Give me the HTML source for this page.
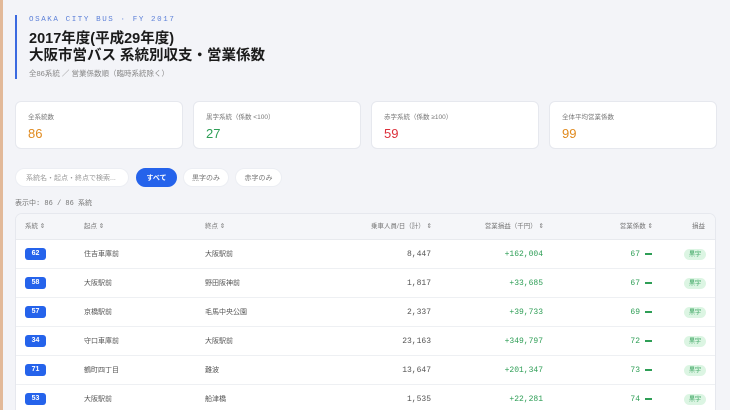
<!DOCTYPE html>
<html><head><meta charset="utf-8"><style>
*{box-sizing:border-box;margin:0;padding:0}
html,body{width:730px;height:410px;overflow:hidden}
body{background:#f3f4f8;font-family:"Liberation Sans","Noto Sans CJK JP",sans-serif;color:#222;position:relative}
.edge{position:absolute;left:0;top:0;width:3px;height:410px;background:#e2b999}
.hdr{position:absolute;left:15px;top:15px;height:64px;border-left:2px solid #3b6ae0;padding-left:12px}
.eyebrow{font-family:"Liberation Mono",monospace;font-size:7.5px;letter-spacing:1.6px;color:#5b7fd8;margin-top:1px}
.title{font-size:14.5px;font-weight:bold;line-height:17px;margin-top:7px;color:#1a1a1a}
.sub{font-size:7.5px;color:#888;margin-top:3px}
.card{position:absolute;top:101px;width:168px;height:48px;background:#fff;border:1px solid #e6e8ee;border-radius:6px;padding:9px 12px}
.card .l{font-size:6.5px;color:#777}
.card .v{font-size:13px;margin-top:5px}
.pill{position:absolute;top:168px;height:19px;border-radius:10px;background:#fff;font-size:7px;color:#777;line-height:19px;text-align:center;border:1px solid #eceef3}
.cnt{position:absolute;left:15px;top:198px;font-size:7px;color:#777;font-family:"Liberation Mono","Noto Sans CJK JP",monospace}
.tbl{position:absolute;left:15px;top:213px;width:701px;height:197px;background:#fff;border:1px solid #e6e8ee;border-bottom:none;border-radius:7px 7px 0 0;overflow:hidden}
.th{height:26px;background:#f5f6f9;border-bottom:1px solid #e8eaee;position:relative;font-size:6.5px;color:#777}
.row{height:29px;border-bottom:1px solid #eef0f3;position:relative;font-size:7px;color:#555}
.c{position:absolute;top:0}
.th .c{line-height:26px}.row .c{line-height:29px}
.b{position:absolute;left:9px;top:8px;background:#2563eb;color:#fff;font-weight:bold;font-size:7px;width:21px;height:12px;line-height:12px;text-align:center;border-radius:3px}
.m{font-family:"Liberation Mono",monospace;font-size:8px}
.g{color:#2e9e56}
.bar{display:inline-block;width:7px;height:2px;background:#2e9e56;vertical-align:middle;margin-left:5px}
.tag{position:absolute;right:9px;top:9px;background:#dcf5e3;color:#2e9e56;font-size:6px;width:22px;height:11px;border-radius:6px;display:flex;align-items:center;justify-content:center;line-height:1}
</style></head><body>
<div class="edge"></div>
<div class="hdr">
<div class="eyebrow">OSAKA CITY BUS · FY 2017</div>
<div class="title">2017年度(平成29年度)<br>大阪市営バス 系統別収支・営業係数</div>
<div class="sub">全86系統 ／ 営業係数順（臨時系統除く）</div>
</div>
<div class="card" style="left:15px"><div class="l">全系統数</div><div class="v" style="color:#e08a1e">86</div></div>
<div class="card" style="left:193px"><div class="l">黒字系統（係数 &lt;100）</div><div class="v" style="color:#2e9e56">27</div></div>
<div class="card" style="left:371px"><div class="l">赤字系統（係数 ≥100）</div><div class="v" style="color:#dc2f3a">59</div></div>
<div class="card" style="left:549px"><div class="l">全体平均営業係数</div><div class="v" style="color:#e08a1e">99</div></div>
<div class="pill" style="left:15px;width:114px;text-align:left;padding-left:10px;color:#999">系統名・起点・終点で検索...</div>
<div class="pill" style="left:136px;width:41px;background:#2563eb;color:#fff;border-color:#2563eb;font-weight:bold">すべて</div>
<div class="pill" style="left:183px;width:46px">黒字のみ</div>
<div class="pill" style="left:235px;width:47px">赤字のみ</div>
<div class="cnt">表示中: 86 / 86 系統</div>
<div class="tbl">
<div class="th"><span class="c" style="left:9px">系統 ⇕</span><span class="c" style="left:68px">起点 ⇕</span><span class="c" style="left:189px">終点 ⇕</span><span class="c" style="right:283px">乗車人員/日（計） ⇕</span><span class="c" style="right:171px">営業損益（千円） ⇕</span><span class="c" style="right:62px">営業係数 ⇕</span><span class="c" style="right:10px">損益</span></div>
<div class="row"><span class="b">62</span><span class="c" style="left:68px">住吉車庫前</span><span class="c" style="left:189px">大阪駅前</span><span class="c m" style="right:284px">8,447</span><span class="c m g" style="right:172px">+162,004</span><span class="c m g" style="right:63px">67<span class="bar"></span></span><span class="tag">黒字</span></div>
<div class="row"><span class="b">58</span><span class="c" style="left:68px">大阪駅前</span><span class="c" style="left:189px">野田阪神前</span><span class="c m" style="right:284px">1,817</span><span class="c m g" style="right:172px">+33,685</span><span class="c m g" style="right:63px">67<span class="bar"></span></span><span class="tag">黒字</span></div>
<div class="row"><span class="b">57</span><span class="c" style="left:68px">京橋駅前</span><span class="c" style="left:189px">毛馬中央公園</span><span class="c m" style="right:284px">2,337</span><span class="c m g" style="right:172px">+39,733</span><span class="c m g" style="right:63px">69<span class="bar"></span></span><span class="tag">黒字</span></div>
<div class="row"><span class="b">34</span><span class="c" style="left:68px">守口車庫前</span><span class="c" style="left:189px">大阪駅前</span><span class="c m" style="right:284px">23,163</span><span class="c m g" style="right:172px">+349,797</span><span class="c m g" style="right:63px">72<span class="bar"></span></span><span class="tag">黒字</span></div>
<div class="row"><span class="b">71</span><span class="c" style="left:68px">鶴町四丁目</span><span class="c" style="left:189px">難波</span><span class="c m" style="right:284px">13,647</span><span class="c m g" style="right:172px">+201,347</span><span class="c m g" style="right:63px">73<span class="bar"></span></span><span class="tag">黒字</span></div>
<div class="row"><span class="b">53</span><span class="c" style="left:68px">大阪駅前</span><span class="c" style="left:189px">船津橋</span><span class="c m" style="right:284px">1,535</span><span class="c m g" style="right:172px">+22,281</span><span class="c m g" style="right:63px">74<span class="bar"></span></span><span class="tag">黒字</span></div>
</div>
</body></html>
